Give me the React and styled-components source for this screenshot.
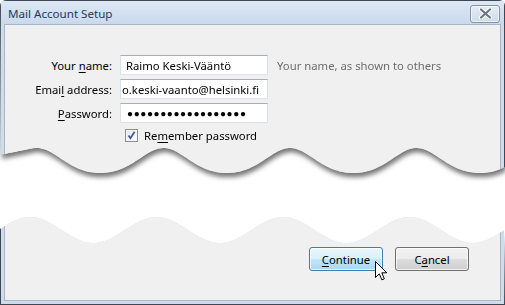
import React from "react";
import styled, { createGlobalStyle } from "styled-components";

const GlobalStyle = createGlobalStyle`
  html, body {
    margin: 0;
    padding: 0;
    background: #fff;
  }
  body {
    width: 505px;
    height: 305px;
    overflow: hidden;
    font-family: "Noto Sans", "Open Sans", sans-serif;
    font-size: 11.3px;
    color: #000;
  }
`;

// torn edges of the screenshot
const W = 505;
const topEdge = () => {
  const pts = [];
  for (let x = W; x >= 0; x -= 2) {
    let y;
    if (x < 37) {
      y = 147.5 + (37 - x) * 0.2;
    } else {
      const u = (x - 37) / 126.5;
      const t = 2 * Math.PI * u + 0.25 * Math.sin(2 * Math.PI * u);
      y = 160.5 - 12.5 * Math.cos(t);
    }
    pts.push(`L${x} ${y.toFixed(1)}`);
  }
  return `path("M0 0 L${W} 0 ${pts.join(" ")} Z")`;
};
const bottomEdge = () => {
  const pts = [];
  for (let x = 0; x <= W; x += 2) {
    const y = 20 - 13 * Math.cos((2 * Math.PI * (x - 30)) / 126.5);
    pts.push(`${x === 0 ? "M" : "L"}${x} ${y.toFixed(1)}`);
  }
  return `path("${pts.join(" ")} L${W} 95 L0 95 Z")`;
};

const Page = styled.div`
  width: 505px;
  height: 305px;
  display: flex;
  flex-direction: column;
`;

const Shadow = styled.div`
  filter: drop-shadow(1px 4px 2.5px rgba(0, 0, 0, 0.55));
`;

const TopPiece = styled.div`
  height: 185px;
  clip-path: ${topEdge()};
  box-sizing: border-box;
  border: 1px solid #3f4753;
  border-bottom: none;
  border-radius: 6px 6px 0 0;
  background: #cfdcec;
  padding: 0 3px;
  display: flex;
  flex-direction: column;
`;

const TitleBar = styled.div`
  height: 23px;
  margin: 0 -3px;
  padding: 0 4px 0 7px;
  display: flex;
  align-items: center;
  justify-content: space-between;
  background: linear-gradient(#dde8f5, #c9d9ec);
`;

const Title = styled.span`
  color: #1e3a5a;
  font-size: 11.6px;
  padding-top: 2px;
`;

const CloseButton = styled.div`
  width: 30px;
  height: 18px;
  margin-top: 2px;
  box-sizing: border-box;
  border: 1px solid #8893a2;
  border-radius: 3px;
  box-shadow: inset 0 0 0 1px rgba(255, 255, 255, 0.6);
  background: linear-gradient(#e4ecf6, #cfdbea);
  display: flex;
  align-items: center;
  justify-content: center;
`;

const Client = styled.div`
  flex: 1;
  background: #f0f0f0;
  border: 1px solid #a9b6c6;
  border-bottom: none;
  padding-top: 30px;
`;

const Form = styled.div`
  display: grid;
  grid-template-columns: 107px 148px auto;
  column-gap: 8px;
  row-gap: 4px;
  align-items: center;
`;

const Label = styled.label`
  text-align: right;
`;

const U = styled.span`
  text-decoration: underline;
  text-underline-offset: 2px;
`;

const Field = styled.div`
  height: 20px;
  box-sizing: border-box;
  border: 1px solid #dbe1e8;
  border-top-color: #abadb3;
  background: #fff;
  padding: 0 ${(p) => (p.$tight ? "1px" : "5px")};
  display: flex;
  align-items: center;
  white-space: nowrap;
  overflow: hidden;
`;

const Dots = styled.span`
  font-size: 10px;
  letter-spacing: 0.6px;
  padding-left: 1px;
`;

const Hint = styled.span`
  color: #6d6d6d;
  padding-left: 1px;
`;

const CheckRow = styled.div`
  grid-column: 2 / 4;
  display: flex;
  align-items: center;
  gap: 6px;
  padding-left: 5px;
  margin-top: 1px;
`;

const Box = styled.div`
  width: 13px;
  height: 13px;
  box-sizing: border-box;
  border: 1px solid #8f8f8f;
  background: linear-gradient(135deg, #e6e6e6, #ffffff);
  box-shadow: inset 0 0 0 1px #f4f4f4;
  display: flex;
  align-items: center;
  justify-content: center;
`;

const BottomPiece = styled.div`
  margin-top: 25px;
  height: 95px;
  clip-path: ${bottomEdge()};
  box-sizing: border-box;
  border: 1px solid #3f4753;
  border-top: none;
  background: #cfdcec;
  padding: 0 3px 3px;
  display: flex;
`;

const Footer = styled.div`
  flex: 1;
  position: relative;
  background: #f0f0f0;
  border: 1px solid #a9b6c6;
  border-top: none;
  display: flex;
  justify-content: flex-end;
  align-items: flex-end;
  gap: 12px;
  padding: 0 31px 29px 0;
`;

const Button = styled.div`
  width: 74px;
  height: 24px;
  box-sizing: border-box;
  border-radius: 3px;
  border: 1px solid ${(p) => (p.$hot ? "#3c7fb1" : "#707070")};
  box-shadow: inset 0 0 0 1px rgba(255, 255, 255, 0.7);
  background: ${(p) =>
    p.$hot
      ? "linear-gradient(#eaf6fd 0%, #d9f0fc 50%, #bee6fd 51%, #a7d9f5 100%)"
      : "linear-gradient(#f2f2f2 0%, #ebebeb 50%, #dddddd 51%, #cfcfcf 100%)"};
  display: flex;
  align-items: center;
  justify-content: center;
`;

const Cursor = styled.svg`
  position: absolute;
  left: 370px;
  top: 51px;
`;

const App = () => {
  return (
    <>
      <GlobalStyle />
      <Page>
        <Shadow>
          <TopPiece>
            <TitleBar>
              <Title>Mail Account Setup</Title>
              <CloseButton>
                <svg width="13" height="11" viewBox="0 0 13 11">
                  <path d="M2 1.5 L11 9.5 M11 1.5 L2 9.5" stroke="#fff" strokeWidth="4.2" strokeLinecap="round" />
                  <path d="M2 1.5 L11 9.5 M11 1.5 L2 9.5" stroke="#6b7584" strokeWidth="2.2" strokeLinecap="round" />
                </svg>
              </CloseButton>
            </TitleBar>
            <Client>
              <Form>
                <Label>Your <U>n</U>ame:</Label>
                <Field>Raimo Keski-Vääntö</Field>
                <Hint>Your name, as shown to others</Hint>
                <Label>Emai<U>l</U> address:</Label>
                <Field $tight>o.keski-vaanto@helsinki.fi</Field>
                <span />
                <Label><U>P</U>assword:</Label>
                <Field>
                  <Dots>{"●".repeat(18)}</Dots>
                </Field>
                <span />
                <span />
                <CheckRow>
                  <Box>
                    <svg width="9" height="9" viewBox="0 0 9 9">
                      <path d="M1.5 4.5 L3.5 7.3 L7.6 0.8" fill="none" stroke="#3f56a0" strokeWidth="1.7" />
                    </svg>
                  </Box>
                  <span>Re<U>m</U>ember password</span>
                </CheckRow>
              </Form>
            </Client>
          </TopPiece>
        </Shadow>
        <BottomPiece>
          <Footer>
            <Button $hot><span><U>C</U>ontinue</span></Button>
            <Button><span>C<U>a</U>ncel</span></Button>
            <Cursor width="13" height="21" viewBox="0 0 13 21">
              <path
                d="M0.5 0.5 L0.5 16.5 L4.3 12.8 L6.8 18.8 L9.3 17.8 L6.8 11.8 L11.8 11.8 Z"
                fill="#fff"
                stroke="#000"
                strokeWidth="1"
                strokeLinejoin="round"
              />
            </Cursor>
          </Footer>
        </BottomPiece>
      </Page>
    </>
  );
};

export default App;
